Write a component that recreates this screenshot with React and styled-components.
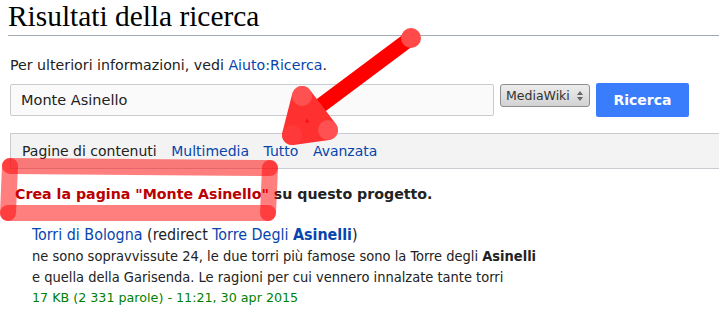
import styled, { createGlobalStyle } from 'styled-components'

const GlobalStyle = createGlobalStyle`
    html, body {
        margin: 0;
        padding: 0;
        background: #ffffff;
    }
    body {
        font-family: 'DejaVu Sans', sans-serif;
        color: #222222;
    }
`

const Page = styled.div`
    position: relative;
    width: 719px;
    height: 322px;
    overflow: hidden;
    padding-left: 8px;
    box-sizing: border-box;
`

const Heading = styled.h1`
    margin: 0;
    padding: 2px 0 4px 0;
    font-family: 'Liberation Serif', serif;
    font-weight: normal;
    font-size: 29.4px;
    line-height: 29px;
    color: #000000;
    border-bottom: 1px solid #a2a9b1;
`

const Info = styled.p`
    margin: 19px 0 0 2px;
    font-size: 14.2px;
    line-height: 20px;
`

const Link = styled.a`
    color: ${p => (p.$red ? '#ba0000' : '#0645ad')};
    text-decoration: none;
    font-weight: ${p => (p.$bold ? 'bold' : 'inherit')};
`

const SearchRow = styled.div`
    display: flex;
    align-items: flex-start;
    margin: 9px 0 0 2px;
`

const SearchInput = styled.div`
    width: 484px;
    height: 32px;
    box-sizing: border-box;
    border: 1px solid #c8ccd1;
    border-radius: 2px;
    background: #fafafa;
    padding: 0 10px;
    display: flex;
    align-items: center;
    font-size: 14.5px;
    color: #222222;
`

const Select = styled.div`
    margin: 0 0 0 6px;
    width: 90px;
    height: 23px;
    box-sizing: border-box;
    border: 1px solid #8e8e8e;
    border-radius: 3px;
    background: linear-gradient(#ededed, #d2d2d2);
    display: flex;
    align-items: center;
    justify-content: space-between;
    padding: 0 6px 0 5px;
    font-size: 12.5px;
    color: #333333;
`

const Arrows = styled.span`
    display: flex;
    flex-direction: column;
    align-items: center;
    gap: 2px;
`

const Tri = styled.span`
    width: 0;
    height: 0;
    border-left: 3px solid transparent;
    border-right: 3px solid transparent;
    ${p => (p.$up ? 'border-bottom: 4px solid #666;' : 'border-top: 4px solid #666;')}
`

const Button = styled.div`
    margin: -1px 0 0 6px;
    width: 93px;
    height: 34px;
    background: #3a7dfc;
    border-radius: 2px;
    color: #ffffff;
    font-weight: bold;
    font-size: 14px;
    display: flex;
    align-items: center;
    justify-content: center;
`

const Tabs = styled.div`
    margin: 16px 0 0 2px;
    height: 36px;
    box-sizing: border-box;
    border-top: 1px solid #c8ccd1;
    border-bottom: 1px solid #c8ccd1;
    border-left: 1px solid #c8ccd1;
    background: #f3f3f3;
    display: flex;
    align-items: center;
    gap: 14.5px;
    padding-left: 11px;
    font-size: 14px;
`

const Tab = styled.span`
    color: ${p => (p.$current ? '#222222' : '#0645ad')};
`

const CreateLine = styled.p`
    margin: 17px 0 0 7px;
    font-size: 14.2px;
    font-weight: bold;
    color: #222222;
`

const Results = styled.ul`
    list-style: none;
    margin: 22px 0 0 24px;
    padding: 0;
`

const ResultTitle = styled.div`
    font-family: 'DejaVu Sans Condensed', 'DejaVu Sans', sans-serif;
    font-stretch: condensed;
    font-size: 15.9px;
    line-height: 22px;
`

const Snippet = styled.div`
    font-family: 'DejaVu Sans Condensed', 'DejaVu Sans', sans-serif;
    font-stretch: condensed;
    font-size: 14.5px;
    line-height: 21px;
    color: #222222;
`

const Meta = styled.div`
    font-size: 12.7px;
    line-height: 20px;
    color: #008000;
`

const Overlay = styled.svg`
    position: absolute;
    left: 0;
    top: 0;
    pointer-events: none;
`

function Annotations() {
    const band = 'rgba(255, 0, 0, 0.5)'
    return (
        <Overlay width='719' height='322' viewBox='0 0 719 322'>
            <g stroke={band} strokeWidth='16' strokeLinecap='round'>
                <line x1='10' y1='166' x2='270' y2='168' />
                <line x1='270' y1='168' x2='268' y2='213' />
                <line x1='268' y1='213' x2='8' y2='213' />
                <line x1='8' y1='213' x2='10' y2='166' />
            </g>
            <line x1='411' y1='38' x2='312' y2='112' stroke='#ff0000' strokeWidth='15' />
            <circle cx='411' cy='38' r='10' fill='#ff4a4a' />
            <polygon
                points='302,96 328,130 292,135'
                fill='#ff1010'
                stroke='#ff3030'
                strokeWidth='20'
                strokeLinejoin='round'
            />
            <circle cx='302' cy='96' r='10' fill='rgba(255,90,90,0.8)' />
            <circle cx='328' cy='130' r='10' fill='rgba(255,90,90,0.8)' />
            <circle cx='292' cy='135' r='10' fill='rgba(255,60,60,0.8)' />
        </Overlay>
    )
}

export default function App() {
    return (
        <>
            <GlobalStyle />
            <Page>
                <Heading>Risultati della ricerca</Heading>
                <Info>
                    Per ulteriori informazioni, vedi <Link>Aiuto:Ricerca</Link>.
                </Info>
                <SearchRow>
                    <SearchInput>Monte Asinello</SearchInput>
                    <Select>
                        MediaWiki
                        <Arrows>
                            <Tri $up />
                            <Tri />
                        </Arrows>
                    </Select>
                    <Button>Ricerca</Button>
                </SearchRow>
                <Tabs>
                    <Tab $current>Pagine di contenuti</Tab>
                    <Tab>Multimedia</Tab>
                    <Tab>Tutto</Tab>
                    <Tab>Avanzata</Tab>
                </Tabs>
                <CreateLine>
                    <Link $red>Crea la pagina "Monte Asinello"</Link> su questo progetto.
                </CreateLine>
                <Results>
                    <li>
                        <ResultTitle>
                            <Link>Torri di Bologna</Link> (redirect <Link>Torre Degli <b>Asinelli</b></Link>)
                        </ResultTitle>
                        <Snippet>
                            ne sono sopravvissute 24, le due torri più famose sono la Torre degli <b>Asinelli</b>
                            <br />
                            e quella della Garisenda. Le ragioni per cui vennero innalzate tante torri
                        </Snippet>
                        <Meta>17 KB (2 331 parole) - 11:21, 30 apr 2015</Meta>
                    </li>
                </Results>
                <Annotations />
            </Page>
        </>
    )
}
